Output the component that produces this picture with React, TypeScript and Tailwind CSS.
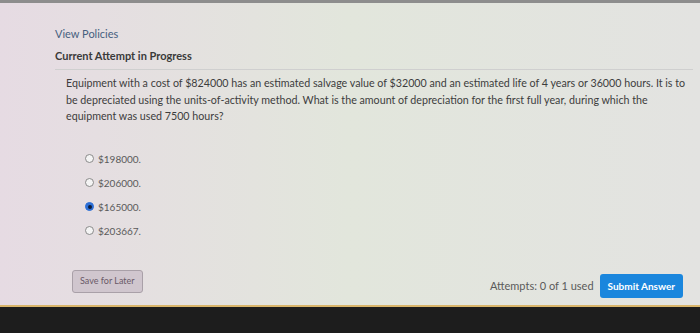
import React from 'react';

const options = ['$198000.', '$206000.', '$165000.', '$203667.'];

export default function App() {
  const selected = 2;
  return (
    <div
      className="w-[700px] h-[333px] flex flex-col overflow-hidden bg-gradient-to-r from-[#e6dbe3] via-[#e2e6dc] to-[#e3e3e1]"
      style={{ fontFamily: 'Lato, "Open Sans", sans-serif' }}
    >
      <div className="h-[3px] bg-[#8d8d8d] shrink-0" />
      <div className="flex-1 flex flex-col pl-[55px] pr-[17px] pt-[24px]">
        <div className="text-[11px] text-[#45607f] leading-[14px]">View Policies</div>
        <div className="text-[11px] font-bold text-[#3a3a3a] leading-[14px] mt-[8px]">Current Attempt in Progress</div>
        <div className="border-t border-[#cfcfcf] mt-[6px] pl-[11px] pt-[5px] -mr-[10px]">
          <p className="text-[10.7px] leading-[16.5px] text-[#3d3d3d]">
            Equipment with a cost of $824000 has an estimated salvage value of $32000 and an estimated life of 4 years or 36000 hours. It is to be depreciated using the units-of-activity method. What is the amount of depreciation for the first full year, during which the equipment was used 7500 hours?
          </p>
          <div className="flex flex-col gap-[10px] mt-[27px] pl-[19px]">
            {options.map((o, i) => (
              <label key={o} className="flex items-center gap-[4px] h-[14px]">
                {i === selected ? (
                  <span className="w-[9px] h-[9px] rounded-full bg-[#2c6fd6] border border-[#2c6fd6] flex items-center justify-center">
                    <span className="w-[4px] h-[4px] rounded-full bg-[#0c1c3a]" />
                  </span>
                ) : (
                  <span className="w-[9px] h-[9px] rounded-full border border-[#8a8a8a] bg-[#f4f4f4]" />
                )}
                <span className="text-[10px] leading-[14px] text-[#5a5a5a]">{o}</span>
              </label>
            ))}
          </div>
        </div>
        <div className="flex items-center mt-auto mb-[7px]">
          <button className="ml-[17px] mt-[-10px] h-[23px] px-[7px] rounded-[3px] border border-[#a9a0a8] bg-[#d0c6ce] text-[9px] text-[#6a5a68]">
            Save for Later
          </button>
          <div className="ml-auto text-[11px] text-[#5a5a5a]">Attempts: 0 of 1 used</div>
          <button className="ml-[6px] h-[24px] px-[8px] rounded-[3px] bg-[#1a86dd] text-white text-[10px] font-bold">
            Submit Answer
          </button>
        </div>
      </div>
      <div className="h-[2px] bg-[#d9b56a] shrink-0" />
      <div className="h-[26px] bg-[#1d1d1d] shrink-0" />
    </div>
  );
}
